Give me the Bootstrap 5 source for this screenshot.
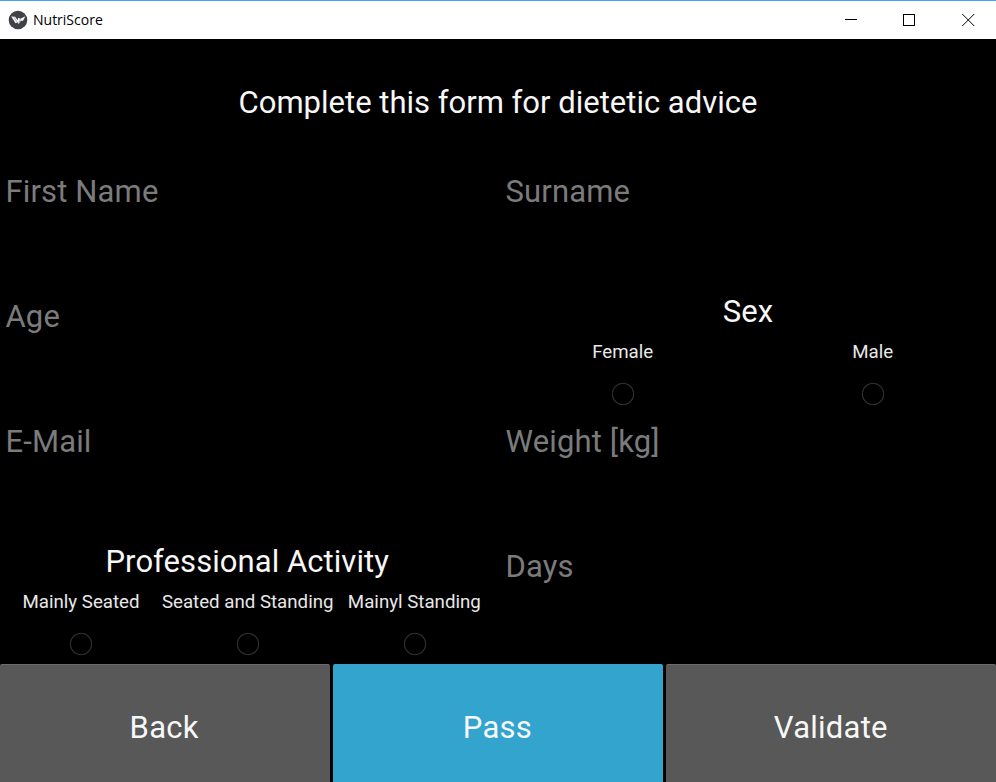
<!DOCTYPE html>
<html lang="en">
<head>
<meta charset="utf-8">
<meta name="viewport" content="width=device-width, initial-scale=1">
<title>NutriScore</title>
<link rel="stylesheet" href="https://cdn.jsdelivr.net/npm/bootstrap@5.3.0/dist/css/bootstrap.min.css">
<style>
body{background:#000;color:#f7f7f7;font-family:Roboto,sans-serif;height:782px}
.titlebar{height:39px;border-top:1px solid #4a9ff5;background:#fff;color:#000}
.app-name{font:14px/20px "Open Sans",sans-serif;margin-left:5px}
.win-btns{margin-right:-1px}
.win-btn{width:58.5px}
.form-area{margin:0 -2px;height:743px}
.form-row,.action-row{height:125px;flex:none}
.big-text{font-size:31px;line-height:36px}
.form-heading{padding-top:2px}
.entry{background:transparent;border:0;color:#fff;width:100%;padding:10px 7.5px;outline:0;letter-spacing:.14px}
.entry::placeholder{color:#7b7b7b;opacity:1}
.group-title{height:42px;padding-top:5px;letter-spacing:.06px}
.group-title.wide-title{padding-right:1.5px}
.choices{font-size:18.7px;line-height:42px;color:#e8e8e8}
.choice-label{height:41px;white-space:nowrap;margin:0 -6px;padding-right:.6px}
.ring{appearance:none;width:24px;height:24px;border:0;border-radius:50%;margin:0;background:radial-gradient(circle,transparent 9.6px,#2d2d2d 10.3px,#2d2d2d 10.8px,transparent 11.6px)}
.ring-box{height:44px}
.kv-btn{background:#585858;border:0;border-top:1px solid #6b6b6b;border-radius:2px;color:#f7f7f7;padding:2px 1px 0 0;margin:0 1.5px;letter-spacing:.25px}
.kv-btn.active-btn{background:#32a4ce;border-top-color:#32a4ce}
</style>
</head>
<body class="overflow-hidden">
<header class="titlebar d-flex align-items-center">
  <svg class="ms-2" width="20" height="20" viewBox="0 0 20 20" aria-hidden="true"><circle cx="10" cy="10" r="9.3" fill="#414247"/><path d="M3.2 6.6 7.2 6.8 9.6 10.2 10.2 7.8 12.4 8.8 17.4 6.2 15 10.8 12.8 10.8 10.6 14.2 9.6 12.2 7.6 13.2Z" fill="#fff"/><path d="m5.8 6.8 3 5M12.4 9.2l-1.8 4.4" stroke="#77787c" stroke-width=".6"/></svg>
  <span class="app-name me-auto">NutriScore</span>
  <div class="win-btns d-flex">
    <svg class="win-btn" height="20" viewBox="0 0 58 20" shape-rendering="crispEdges"><path d="M23 9.5h12" stroke="#000"/></svg>
    <svg class="win-btn" height="20" viewBox="0 0 58 20" shape-rendering="crispEdges"><path d="M23.5 4.5h11v11h-11z" fill="none" stroke="#000"/></svg>
    <svg class="win-btn" height="20" viewBox="0 0 58 20"><path d="m23 4 12 12M35 4 23 16" stroke="#000"/></svg>
  </div>
</header>
<main class="form-area d-flex flex-column">
  <div class="form-row d-flex align-items-center justify-content-center"><h1 class="form-heading big-text fw-normal mb-0">Complete this form for dietetic advice</h1></div>
  <div class="form-row row g-0">
    <div class="col-6"><input class="entry big-text" placeholder="First Name"></div>
    <div class="col-6"><input class="entry big-text" placeholder="Surname"></div>
  </div>
  <div class="form-row row g-0">
    <div class="col-6"><input class="entry big-text" placeholder="Age"></div>
    <div class="col-6 text-center">
      <div class="group-title big-text">Sex</div>
      <div class="row g-0 choices">
        <label class="col-6"><span class="choice-label d-block">Female</span><span class="ring-box d-flex align-items-center justify-content-center"><input class="ring" type="radio" name="sex"></span></label>
        <label class="col-6"><span class="choice-label d-block">Male</span><span class="ring-box d-flex align-items-center justify-content-center"><input class="ring" type="radio" name="sex"></span></label>
      </div>
    </div>
  </div>
  <div class="form-row row g-0">
    <div class="col-6"><input class="entry big-text" placeholder="E-Mail"></div>
    <div class="col-6"><input class="entry big-text" placeholder="Weight [kg]"></div>
  </div>
  <div class="form-row row g-0">
    <div class="col-6 text-center">
      <div class="group-title wide-title big-text">Professional Activity</div>
      <div class="row g-0 choices">
        <label class="col-4"><span class="choice-label d-block">Mainly Seated</span><span class="ring-box d-flex align-items-center justify-content-center"><input class="ring" type="radio" name="work"></span></label>
        <label class="col-4"><span class="choice-label d-block">Seated and Standing</span><span class="ring-box d-flex align-items-center justify-content-center"><input class="ring" type="radio" name="work"></span></label>
        <label class="col-4"><span class="choice-label d-block">Mainyl Standing</span><span class="ring-box d-flex align-items-center justify-content-center"><input class="ring" type="radio" name="work"></span></label>
      </div>
    </div>
    <div class="col-6"><input class="entry big-text" placeholder="Days"></div>
  </div>
  <div class="action-row d-flex">
    <button class="kv-btn big-text flex-fill w-100">Back</button>
    <button class="kv-btn active-btn big-text flex-fill w-100">Pass</button>
    <button class="kv-btn big-text flex-fill w-100">Validate</button>
  </div>
</main>
<script src="https://cdn.jsdelivr.net/npm/bootstrap@5.3.0/dist/js/bootstrap.bundle.min.js"></script>
</body>
</html>
